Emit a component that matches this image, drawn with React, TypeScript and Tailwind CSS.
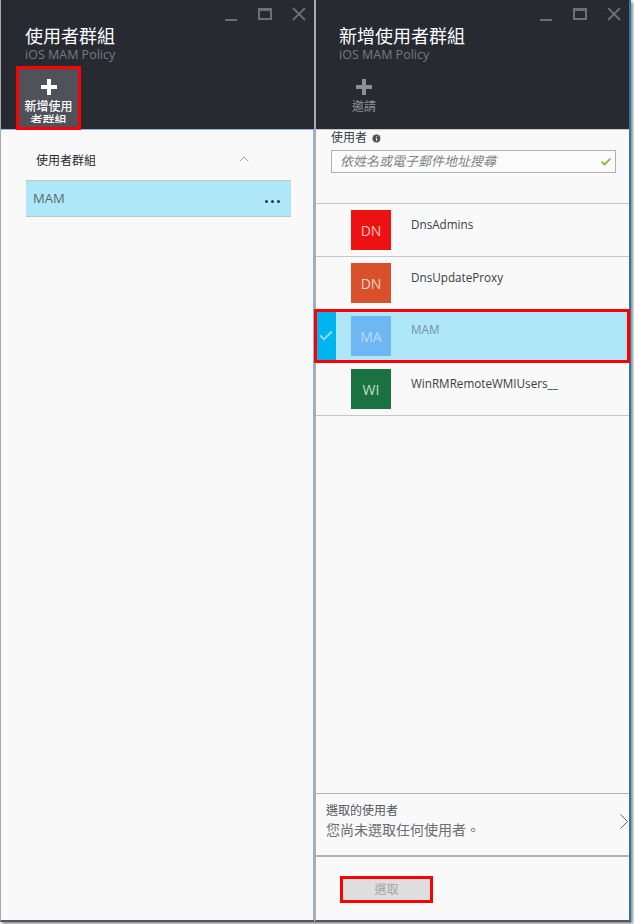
import type { ReactNode } from 'react';
import { Check, ChevronUp, Info, X } from 'lucide-react';

const font = 'font-["Open_Sans","Noto_Sans_CJK_TC",sans-serif]';

const users = [
  { initials: 'DN', name: 'DnsAdmins', color: 'bg-[#ec1212]' },
  { initials: 'DN', name: 'DnsUpdateProxy', color: 'bg-[#d9512b]' },
  { initials: 'MA', name: 'MAM', color: 'bg-[#6fb7f2]', selected: true },
  { initials: 'WI', name: 'WinRMRemoteWMIUsers__', color: 'bg-[#1a7240]' },
];

function PlusGlyph({ className }: { className: string }) {
  return (
    <svg viewBox="0 0 16 16" className={className} fill="currentColor">
      <path d="M6 0h4v6h6v4h-6v6H6v-6H0V6h6z" />
    </svg>
  );
}

function WindowButtons() {
  return (
    <div className="flex justify-end items-center h-[26px] pr-[4px] pt-[2px]">
      <div className="w-[12px] h-[2px] mt-[12px] bg-[#6d6f76]" />
      <div className="w-[14px] h-[12px] ml-[21px] border-2 border-t-[3px] border-[#6d6f76]" />
      <X className="w-[22px] h-[22px] ml-[16px] text-[#6d6f76]" strokeWidth={2} />
    </div>
  );
}

function Header({ title, children }: { title: string; children: ReactNode }) {
  return (
    <div className="h-[129px] bg-[#282a32] shrink-0">
      <WindowButtons />
      <div className="text-[18px] leading-[20px] text-white">{title}</div>
      <div className="text-[12.5px] leading-[17px] text-[#777a82]">iOS MAM Policy</div>
      {children}
    </div>
  );
}

function UserRow({ user }: { user: (typeof users)[number] }) {
  return (
    <div className={`relative flex h-[53px] pt-[6px] pl-[35px] border-b border-[#c6c6c6] ${user.selected ? 'bg-[#aee7f7]' : ''}`}>
      <div
        className={`w-[40px] h-[40px] ${user.color} flex items-center justify-center text-[14px] ${
          user.selected ? 'text-[#b4dcf8]' : 'text-white/75'
        }`}
      >
        {user.initials}
      </div>
      <div className={`ml-[20px] text-[11.7px] leading-[20px] ${user.selected ? 'pt-[3px] text-[#74939f]' : 'pt-[4px] text-[#3a3d44]'}`}>
        {user.name}
      </div>
      {user.selected && (
        <>
          <div className="absolute left-0 top-0 bottom-0 w-[20px] bg-[#00b4f0] flex items-center justify-center">
            <Check className="w-[16px] h-[16px] text-[#8fdcf8]" strokeWidth={3} />
          </div>
          {/* red annotation box */}
          <div className="absolute -left-[2px] -right-[1px] -top-[1px] -bottom-[1px] border-[3px] border-[#ff0000]" />
        </>
      )}
    </div>
  );
}

export default function App() {
  return (
    <div className={`w-[634px] h-[924px] bg-white ${font}`}>
      <div className="w-[631px] h-[922px] flex shadow-[2px_2px_3px_#8a8a8a]">
        {/* left blade */}
        <div className="w-[314px] h-full flex flex-col border-l border-[#a8a8a8] border-b-2 border-b-[#55575c]">
          <div className="pl-[24px] bg-[#282a32]">
            <Header title="使用者群組">
              <div className="relative z-10 w-[65px] h-[64px] -ml-[9px] mt-[3px] border-[3px] border-[#ff0000] bg-[#50525a] flex flex-col items-center text-white">
                <PlusGlyph className="w-[16px] h-[16px] mt-[10px] shrink-0" />
                <div className="h-[23px] overflow-hidden w-[50px] mt-[5px] text-[12px] leading-[14px] text-center font-medium">
                  新增使用者群組
                </div>
              </div>
            </Header>
          </div>
          <div className="flex-1 bg-[#f9f9f9] border-t border-[#8fb2e6] border-r border-r-[#8fb2e6] pl-[25px] pr-[22px]">
            <div className="flex items-center justify-between h-[50px] pl-[10px] pr-[39px] pt-[12px] text-[12px] text-[#26282e]">
              <span>使用者群組</span>
              <ChevronUp className="w-[16px] h-[16px] text-[#707070] -mt-[4px]" strokeWidth={1} />
            </div>
            <div className="flex items-center justify-between h-[37px] border-y border-[#c4c4c4] bg-[#aee7f7] pl-[7px] pr-[11px] text-[13px] text-[#5a6a72]">
              <span>MAM</span>
              <span className="flex gap-[3px] mt-[6px]">
                <i className="w-[3px] h-[3px] rounded-full bg-[#30343a]" />
                <i className="w-[3px] h-[3px] rounded-full bg-[#30343a]" />
                <i className="w-[3px] h-[3px] rounded-full bg-[#30343a]" />
              </span>
            </div>
          </div>
        </div>

        {/* right blade */}
        <div className="w-[317px] h-full flex flex-col border-l-2 border-l-[#a8acb4] border-b-2 border-b-[#55575c] border-r-2 border-r-[#2a78a8]">
          <div className="pl-[23px] bg-[#282a32]">
            <Header title="新增使用者群組">
              <div className="w-[50px] mt-[16px] flex flex-col items-center text-[#8d8f95]">
                <PlusGlyph className="w-[16px] h-[16px] shrink-0" />
                <div className="text-[12px] leading-[16px] mt-[4px]">邀請</div>
              </div>
            </Header>
          </div>
          <div className="flex-1 flex flex-col bg-[#f9f9f9] border-t border-[#c6c6c6]">
            <div className="h-[74px] shrink-0 border-b border-[#c6c6c6] pl-[15px] pr-[13px]">
              <div className="flex items-center gap-[4px] h-[16px] text-[12px] text-[#3a3d44]">
                使用者
                <Info className="w-[11px] h-[11px] text-white fill-[#555]" />
              </div>
              <div className="mt-[4px] h-[23px] border border-[#b0b0b0] bg-white/40 flex items-center justify-between pl-[8px] pr-[3px]">
                <span className="text-[13px] italic text-[#80848a]">依姓名或電子郵件地址搜尋</span>
                <Check className="w-[12px] h-[12px] text-[#6cb30e]" strokeWidth={3} />
              </div>
            </div>
            {users.map((user) => (
              <UserRow key={user.name} user={user} />
            ))}
            <div className="flex-1" />
            <div className="h-[64px] shrink-0 border-t border-[#b4b4b4] border-b-2 border-b-[#b4b4b4] pl-[10px] pr-[1px] pt-[8px] flex justify-between">
              <div>
                <div className="text-[12px] leading-[18px] text-[#53565c]">選取的使用者</div>
                <div className="text-[14px] leading-[20px] text-[#6a6d72]">您尚未選取任何使用者。</div>
              </div>
              <svg viewBox="0 0 8 15" className="w-[8px] h-[15px] mt-[12px]" fill="none" stroke="#60636a">
                <path d="M0.5 0.5L7.5 7.5L0.5 14.5" />
              </svg>
            </div>
            <div className="h-[63px] shrink-0 pl-[24px] pt-[19px]">
              <div className="w-[93px] h-[27px] border-[3px] border-[#ff0000] bg-[#dedede] flex items-center justify-center text-[12px] text-[#a5a5a5]">
                選取
              </div>
            </div>
          </div>
        </div>
      </div>
    </div>
  );
}
